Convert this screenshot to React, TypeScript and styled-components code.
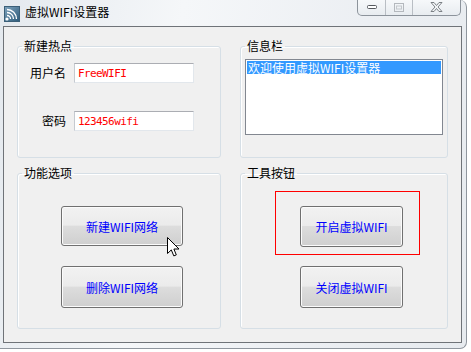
import React from 'react';
import styled, { createGlobalStyle } from 'styled-components';

const GlobalStyle = createGlobalStyle`
  html, body {
    margin: 0;
    padding: 0;
    background: #ffffff;
  }
  body {
    font-family: "Noto Sans CJK SC", "DejaVu Sans", sans-serif;
    font-size: 12px;
  }
`;

const Page = styled.div`
  position: relative;
  width: 471px;
  height: 352px;
  overflow: hidden;
`;

const Frame = styled.div`
  width: 466px;
  height: 348px;
  display: flex;
  flex-direction: column;
  background: linear-gradient(100deg, #e4e9ee 0%, #f5f7f9 35%, #eceff3 70%, #e7ebef 100%);
  border-right: 1px solid #8f969e;
  border-bottom: 1px solid #8f969e;
  border-radius: 0 7px 7px 0;
`;

const TitleBar = styled.div`
  height: 26px;
  display: flex;
  align-items: flex-start;
  flex-shrink: 0;
`;

const AppIcon = styled.svg`
  margin: 6px 0 0 4px;
  width: 16px;
  height: 16px;
`;

const Title = styled.span`
  margin: 4px 0 0 5px;
  font-size: 12px;
  line-height: 16px;
  color: #000000;
`;

const Controls = styled.div`
  margin: -1px 5px 0 auto;
  display: flex;
  height: 16px;
  border: 1px solid #8c939b;
  border-top: none;
  border-radius: 0 0 5px 5px;
  background: linear-gradient(#f7f9fb, #e8ecf0);
  overflow: hidden;
`;

const Ctrl = styled.div<{ $w: number; $last?: boolean }>`
  width: ${p => p.$w}px;
  display: flex;
  align-items: center;
  justify-content: center;
  border-right: ${p => (p.$last ? 'none' : '1px solid #b9bec4')};
`;

const Client = styled.div`
  margin: 0 4px 0 3px;
  height: 317px;
  box-sizing: border-box;
  border: 1px solid #6f7378;
  background: #f0f0f0;
  padding: 11px 12px 13px 13px;
  display: grid;
  grid-template-columns: 204px 208px;
  grid-template-rows: 120px 164px;
  column-gap: 19px;
  row-gap: 7px;
`;

const Group = styled.fieldset`
  margin: 0;
  padding: 0;
  min-width: 0;
  box-sizing: border-box;
  border: 1px solid #d6dfe6;
  border-radius: 3px;
  box-shadow: inset 1px 1px 0 #ffffff;
  display: flex;
  flex-direction: column;
  align-items: flex-start;
`;

const Legend = styled.legend`
  margin-left: 4px;
  padding: 0 2px;
  font-size: 12px;
  line-height: 16px;
  color: #000000;
`;

const Form = styled.div`
  margin: 9px 0 0 0;
  display: grid;
  grid-template-columns: 48px 120px;
  column-gap: 8px;
  row-gap: 28px;
  align-items: center;
`;

const Label = styled.span`
  text-align: right;
  font-size: 12px;
  line-height: 14px;
  color: #000000;
`;

const TextBox = styled.div`
  height: 20px;
  box-sizing: border-box;
  background: #ffffff;
  border: 1px solid #e2e7ec;
  border-top-color: #abadb3;
  border-left-color: #c5cad0;
  padding: 0 3px;
  display: flex;
  align-items: center;
  font-family: "DejaVu Sans Mono", "Liberation Mono", monospace;
  font-size: 11px;
  letter-spacing: -0.6px;
  color: #ff0000;
`;

const ListBox = styled.div`
  margin: 5px 0 0 4px;
  width: 198px;
  height: 76px;
  box-sizing: border-box;
  border: 1px solid #828790;
  background: #ffffff;
  padding: 1px;
`;

const ListItem = styled.div<{ $selected?: boolean }>`
  height: 13px;
  line-height: 13px;
  padding-left: 1px;
  font-size: 12px;
  white-space: nowrap;
  color: ${p => (p.$selected ? '#ffffff' : '#000000')};
  background: ${p => (p.$selected ? '#3399ff' : 'transparent')};
`;

const Button = styled.div<{ $w: number; $h: number; $mt: number; $ml: number }>`
  width: ${p => p.$w}px;
  height: ${p => p.$h}px;
  margin: ${p => p.$mt}px 0 0 ${p => p.$ml}px;
  box-sizing: border-box;
  border: 1px solid #707070;
  border-radius: 3px;
  background: linear-gradient(#f2f2f2 0%, #ebebeb 48%, #dddddd 50%, #cfcfcf 100%);
  box-shadow: inset 0 0 0 1px #fbfbfb;
  display: flex;
  align-items: center;
  justify-content: center;
  font-size: 12px;
  color: #0000ff;
  white-space: nowrap;
`;

const FocusFrame = styled.div`
  margin: 10px 0 0 34px;
  width: 145px;
  height: 64px;
  box-sizing: border-box;
  border: 1px solid #ff0000;
  padding: 14px 0 0 24px;
`;

const Cursor = styled.svg`
  position: absolute;
  left: 167px;
  top: 237px;
  width: 13px;
  height: 20px;
`;

const App: React.FC = () => {
  return (
    <Page>
      <GlobalStyle />
      <Frame>
        <TitleBar>
          <AppIcon viewBox="0 0 16 16">
            <defs>
              <linearGradient id="ico" x1="0" y1="0" x2="1" y2="1">
                <stop offset="0" stopColor="#7fa3bd" />
                <stop offset="1" stopColor="#2d5b7a" />
              </linearGradient>
            </defs>
            <rect x="0.5" y="0.5" width="15" height="15" fill="url(#ico)" stroke="#3b5f78" />
            <circle cx="3" cy="13" r="1.6" fill="#ffffff" />
            <path d="M3 9.5a3.5 3.5 0 0 1 3.5 3.5" fill="none" stroke="#ffffff" strokeWidth="1.3" />
            <path d="M3 6.5a6.5 6.5 0 0 1 6.5 6.5" fill="none" stroke="#ffffff" strokeWidth="1.3" />
            <path d="M3 3.5a9.5 9.5 0 0 1 9.5 9.5" fill="none" stroke="#ffffff" strokeWidth="1.3" />
          </AppIcon>
          <Title>虚拟WIFI设置器</Title>
          <Controls>
            <Ctrl $w={27}>
              <svg width="10" height="4" viewBox="0 0 10 4">
                <rect x="0.5" y="0.5" width="9" height="3" rx="1" fill="#ffffff" stroke="#55595e" />
              </svg>
            </Ctrl>
            <Ctrl $w={26}>
              <svg width="10" height="9" viewBox="0 0 10 9">
                <rect x="0.5" y="0.5" width="9" height="8" fill="none" stroke="#b4b8bd" />
                <rect x="2.5" y="3" width="5" height="3" fill="none" stroke="#c4c8cc" />
              </svg>
            </Ctrl>
            <Ctrl $w={47} $last>
              <svg width="13" height="10" viewBox="0 0 13 10">
                <path
                  d="M1 0.5h3l2.5 3 2.5-3h3l-4 4.5 4 4.5h-3l-2.5-3-2.5 3h-3l4-4.5z"
                  fill="#f4f6f8"
                  stroke="#6f757b"
                  strokeWidth="0.9"
                />
              </svg>
            </Ctrl>
          </Controls>
        </TitleBar>
        <Client>
          <Group>
            <Legend>新建热点</Legend>
            <Form>
              <Label>用户名</Label>
              <TextBox>FreeWIFI</TextBox>
              <Label>密码</Label>
              <TextBox>123456wifi</TextBox>
            </Form>
          </Group>
          <Group>
            <Legend>信息栏</Legend>
            <ListBox>
              <ListItem $selected>欢迎使用虚拟WIFI设置器</ListItem>
            </ListBox>
          </Group>
          <Group>
            <Legend>功能选项</Legend>
            <Button $w={122} $h={40} $mt={25} $ml={43}>新建WIFI网络</Button>
            <Button $w={122} $h={42} $mt={20} $ml={43}>删除WIFI网络</Button>
          </Group>
          <Group>
            <Legend>工具按钮</Legend>
            <FocusFrame>
              <Button $w={103} $h={41} $mt={0} $ml={0}>开启虚拟WIFI</Button>
            </FocusFrame>
            <Button $w={103} $h={42} $mt={11} $ml={59}>关闭虚拟WIFI</Button>
          </Group>
        </Client>
      </Frame>
      <Cursor viewBox="0 0 13 20">
        <path
          d="M0.5 0.5 L0.5 16.5 L4.3 12.9 L6.8 18.9 L9.3 17.9 L6.9 12 L12 12 Z"
          fill="#ffffff"
          stroke="#000000"
          strokeWidth="1"
          strokeLinejoin="miter"
        />
      </Cursor>
    </Page>
  );
};

export default App;
